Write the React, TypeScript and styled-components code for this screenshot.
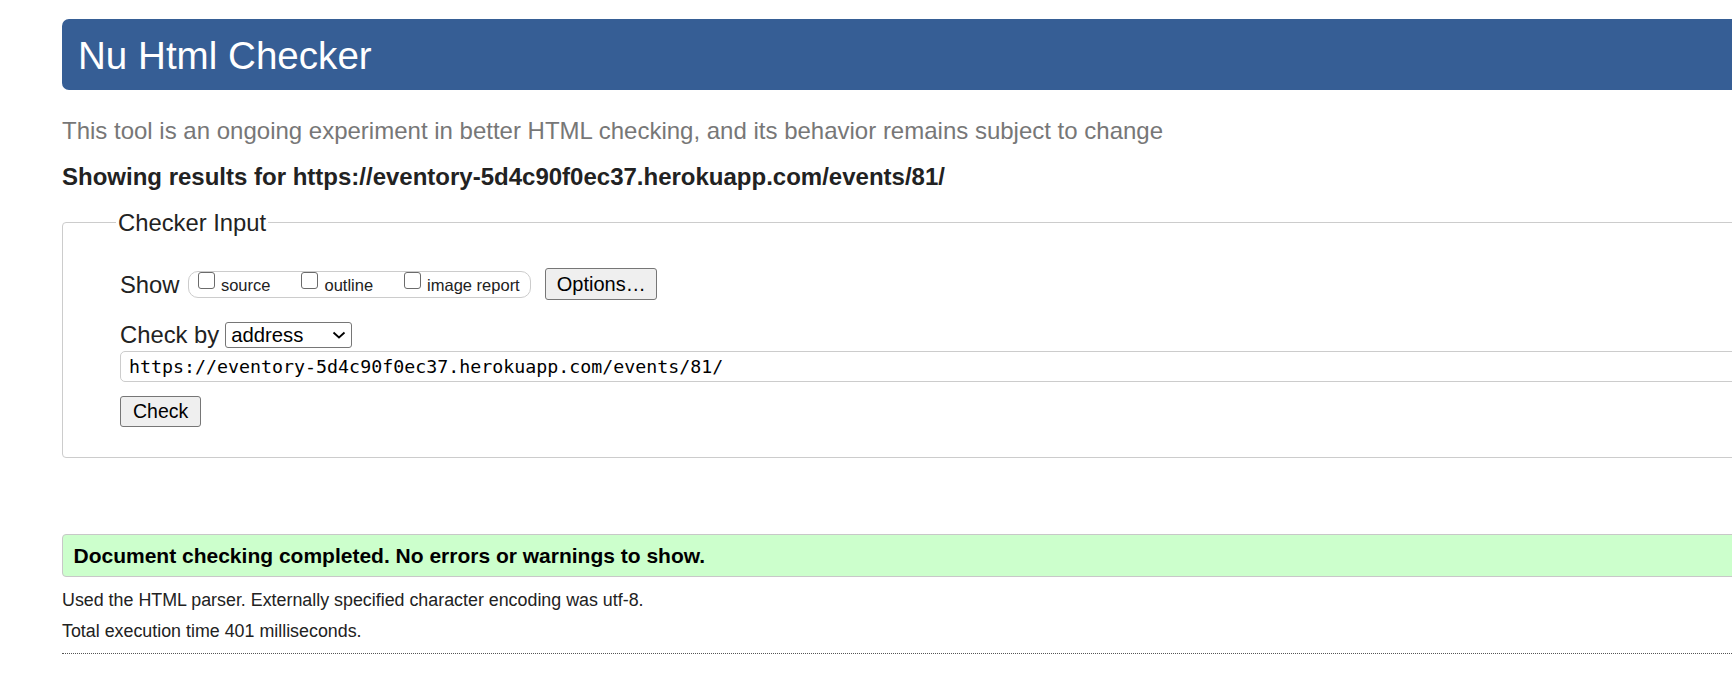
import React from "react";
import styled, { createGlobalStyle } from "styled-components";

const GlobalStyle = createGlobalStyle`
  html, body {
    margin: 0;
    padding: 0;
    background: #ffffff;
    overflow: hidden;
  }
  body {
    font-family: "Liberation Sans", Arial, sans-serif;
    color: #222222;
  }
`;

const Page = styled.div`
  width: 1800px;
  box-sizing: border-box;
  padding: 19px 0 0 62px;
`;

const Header = styled.header`
  height: 71px;
  box-sizing: border-box;
  background: #365e95;
  border-radius: 7px;
  padding: 15px 0 0 16px;
`;

const Title = styled.h1`
  margin: 0;
  font-weight: normal;
  font-size: 38.6px;
  line-height: 44px;
  color: #ffffff;
`;

const Intro = styled.p`
  margin: 27px 0 0;
  font-size: 24px;
  line-height: 28px;
  color: #777777;
`;

const Showing = styled.p`
  margin: 17.7px 0 0;
  font-size: 24px;
  line-height: 28px;
  font-weight: bold;
  color: #222222;
`;

const InputFieldset = styled.fieldset`
  margin: 18.6px 0 0;
  min-width: 0;
  padding: 32px 0 29.5px 57px;
  border: 1px solid #cccccc;
  border-radius: 4px;
`;

const Legend = styled.legend`
  margin-left: -4px;
  padding: 0 2px;
  font-size: 23.8px;
  line-height: 27px;
  color: #222222;
`;

const Row = styled.div`
  display: flex;
  align-items: center;
`;

const ShowRow = styled(Row)`
  height: 32px;
`;

const CheckByRow = styled(Row)`
  height: 27px;
  margin-top: 20.8px;
`;

const RowLabel = styled.span<{ $gap: number }>`
  font-size: 23.8px;
  line-height: 27px;
  color: #222222;
  margin-right: ${(p) => p.$gap}px;
`;

const Pill = styled.div`
  display: inline-flex;
  align-items: flex-start;
  height: 26.5px;
  box-sizing: border-box;
  border: 1px solid #cccccc;
  border-radius: 10px;
  padding: 0 10px 0 9.4px;
`;

const OptionItem = styled.label`
  display: flex;
  align-items: flex-start;
  & + & {
    margin-left: 31px;
  }
`;

const Box = styled.input`
  appearance: none;
  -webkit-appearance: none;
  width: 17px;
  height: 17px;
  margin: 0;
  box-sizing: border-box;
  border: 1px solid #6b6b6b;
  border-radius: 3px;
  background: #ffffff;
`;

const OptionText = styled.span`
  margin-left: 6px;
  padding-top: 4px;
  font-size: 16.5px;
  line-height: 19px;
  color: #222222;
`;

const Button = styled.button<{ $h: number; $pad: number; $size: number }>`
  height: ${(p) => p.$h}px;
  padding: 0 ${(p) => p.$pad}px;
  box-sizing: border-box;
  border: 1px solid #767676;
  border-radius: 3px;
  background: #efefef;
  font-family: "Liberation Sans", Arial, sans-serif;
  font-size: ${(p) => p.$size}px;
  color: #000000;
`;

const OptionsButton = styled(Button)`
  margin-left: 14.6px;
`;

const CheckButton = styled(Button)`
  display: block;
  margin-top: 14px;
`;

const SelectWrap = styled.div`
  position: relative;
  width: 127px;
  height: 26px;
`;

const Select = styled.select`
  appearance: none;
  -webkit-appearance: none;
  width: 100%;
  height: 100%;
  box-sizing: border-box;
  margin: 0;
  border: 1px solid #767676;
  border-radius: 3px;
  padding: 0 0 0 5px;
  background: #ffffff;
  font-family: "Liberation Sans", Arial, sans-serif;
  font-size: 20.3px;
  color: #000000;
`;

const Chevron = styled.svg`
  position: absolute;
  right: 6px;
  top: 9.5px;
  pointer-events: none;
`;

const AddressInput = styled.input`
  display: block;
  width: 100%;
  height: 31px;
  margin-top: 3px;
  box-sizing: border-box;
  border: 1px solid #cccccc;
  border-radius: 5px;
  padding: 0 8px;
  font-family: "DejaVu Sans Mono", "Liberation Mono", monospace;
  font-size: 18.3px;
  color: #000000;
`;

const Success = styled.div`
  margin-top: 76.5px;
  border: 1px solid #c8c8c8;
  border-radius: 4px;
  background: #ccffcc;
  padding: 8.1px 10.5px;
  font-size: 21px;
  line-height: 25px;
  font-weight: bold;
  color: #000000;
`;

const Info = styled.p<{ $top: number }>`
  margin: ${(p) => p.$top}px 0 0;
  font-size: 17.85px;
  line-height: 20px;
  color: #222222;
`;

const Dotted = styled.hr`
  margin: 12.5px 0 0;
  height: 0;
  border: 0;
  border-top: 1px dotted #555555;
`;

const options = ["source", "outline", "image report"];

export default function App() {
  return (
    <>
      <GlobalStyle />
      <Page>
        <Header>
          <Title>Nu Html Checker</Title>
        </Header>
        <Intro>
          This tool is an ongoing experiment in better HTML checking, and its behavior remains
          subject to change
        </Intro>
        <Showing>Showing results for https://eventory-5d4c90f0ec37.herokuapp.com/events/81/</Showing>
        <InputFieldset>
          <Legend>Checker Input</Legend>
          <ShowRow>
            <RowLabel $gap={8}>Show</RowLabel>
            <Pill>
              {options.map((o) => (
                <OptionItem key={o}>
                  <Box type="checkbox" />
                  <OptionText>{o}</OptionText>
                </OptionItem>
              ))}
            </Pill>
            <OptionsButton type="button" $h={32} $pad={10.5} $size={20}>
              Options…
            </OptionsButton>
          </ShowRow>
          <CheckByRow>
            <RowLabel $gap={6}>Check by</RowLabel>
            <SelectWrap>
              <Select defaultValue="address">
                <option value="address">address</option>
                <option value="file">file upload</option>
                <option value="text">text input</option>
              </Select>
              <Chevron width="14" height="8" viewBox="0 0 14 8">
                <polyline points="1.5,1.5 7,6.5 12.5,1.5" fill="none" stroke="#000" strokeWidth="1.8" />
              </Chevron>
            </SelectWrap>
          </CheckByRow>
          <AddressInput
            type="url"
            defaultValue="https://eventory-5d4c90f0ec37.herokuapp.com/events/81/"
          />
          <CheckButton type="button" $h={31} $pad={12} $size={19.5}>
            Check
          </CheckButton>
        </InputFieldset>
        <Success>Document checking completed. No errors or warnings to show.</Success>
        <Info $top={12.3}>
          Used the HTML parser. Externally specified character encoding was utf-8.
        </Info>
        <Info $top={11}>Total execution time 401 milliseconds.</Info>
        <Dotted />
      </Page>
    </>
  );
}
